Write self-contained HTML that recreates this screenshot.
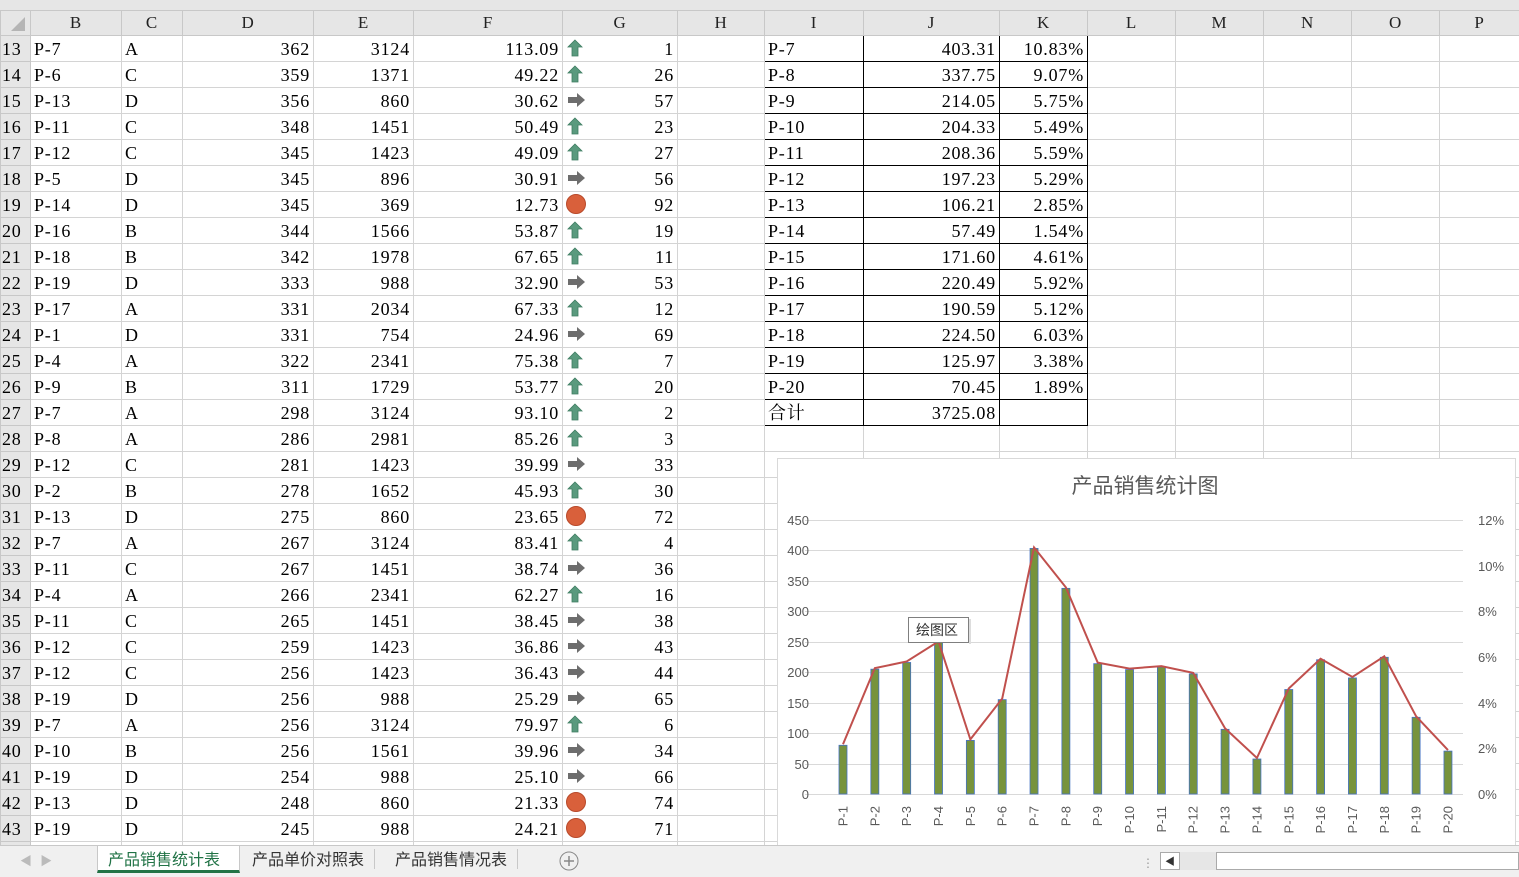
<!DOCTYPE html>
<html><head><meta charset="utf-8">
<style>
*{margin:0;padding:0;box-sizing:border-box}
body{width:1519px;height:877px;overflow:hidden;background:#fff;position:relative;font-family:"Liberation Serif","Noto Serif CJK SC",serif;font-size:18px;letter-spacing:0.8px;color:#000}
#top{position:absolute;left:0;top:0;width:1519px;height:10px;background:#e6e6e6}
table{position:absolute;left:0;top:10px;border-collapse:collapse;table-layout:fixed;width:1519px}
td{height:26px;padding:0 3px;border:1px solid #d4d4d4;white-space:nowrap;overflow:hidden;line-height:24px}
tr.h td{height:25px;line-height:22px;background:#e6e6e6;text-align:center;border-color:#c8c8c8;font-size:17px;color:#222}
td.r{text-align:right}
td.n{background:#e6e6e6;border-color:#c8c8c8;padding:0 1px;font-size:18px}
td.b{border:1px solid #000}
td.g{position:relative;text-align:right}
td.g svg{position:absolute;left:3px;top:3px}
#tabs{position:absolute;left:0;top:845px;width:1519px;height:32px;background:#f0f0f0;border-top:1px solid #c8c8c8;font-family:"Noto Sans CJK SC",sans-serif;font-size:16px;color:#333;letter-spacing:0}
.tab{position:absolute;top:0;height:27px;line-height:24px;padding:0 10px}
</style></head><body>
<div id="top"></div>
<table>
<colgroup><col style="width:30px"><col style="width:91px"><col style="width:61px"><col style="width:131px"><col style="width:100px"><col style="width:149px"><col style="width:115px"><col style="width:87px"><col style="width:99px"><col style="width:136px"><col style="width:88px"><col style="width:88px"><col style="width:88px"><col style="width:88px"><col style="width:88px"><col style="width:80px"></colgroup>
<tr class="h"><td style="background:#e6e6e6;position:relative"><svg width="20" height="20" style="position:absolute;left:6px;top:2px"><polygon points="18,4 18,18 4,18" fill="#b5b5b5"/></svg></td><td>B</td><td>C</td><td>D</td><td>E</td><td>F</td><td>G</td><td>H</td><td>I</td><td>J</td><td>K</td><td>L</td><td>M</td><td>N</td><td>O</td><td>P</td></tr>
<tbody id="tb"></tbody>
</table>
<svg width="1519" height="845" style="position:absolute;left:0;top:0;letter-spacing:0" font-family="Liberation Sans, sans-serif">
<rect x="777.5" y="458.5" width="738" height="400" fill="#fff" stroke="#d9d9d9"/>
<text x="1145" y="493" text-anchor="middle" font-size="21" fill="#595959" font-family="Noto Sans CJK SC, sans-serif">产品销售统计图</text>
<g stroke="#d9d9d9" stroke-width="1">
<line x1="805" x2="1463" y1="520.5" y2="520.5"/><line x1="805" x2="1463" y1="550.5" y2="550.5"/><line x1="805" x2="1463" y1="581.5" y2="581.5"/><line x1="805" x2="1463" y1="611.5" y2="611.5"/><line x1="805" x2="1463" y1="642.5" y2="642.5"/><line x1="805" x2="1463" y1="672.5" y2="672.5"/><line x1="805" x2="1463" y1="703.5" y2="703.5"/><line x1="805" x2="1463" y1="733.5" y2="733.5"/><line x1="805" x2="1463" y1="764.5" y2="764.5"/><line x1="805" x2="1463" y1="794.5" y2="794.5"/>
</g>
<g font-size="13" fill="#595959" text-anchor="end">
<text x="809" y="525">450</text><text x="809" y="555">400</text><text x="809" y="586">350</text><text x="809" y="616">300</text><text x="809" y="647">250</text><text x="809" y="677">200</text><text x="809" y="708">150</text><text x="809" y="738">100</text><text x="809" y="769">50</text><text x="809" y="799">0</text>
</g>
<g font-size="13" fill="#595959">
<text x="1478" y="525">12%</text><text x="1478" y="571">10%</text><text x="1478" y="616">8%</text><text x="1478" y="662">6%</text><text x="1478" y="708">4%</text><text x="1478" y="753">2%</text><text x="1478" y="799">0%</text>
</g>
<g id="bars" fill="#77933c" stroke="#4472c4" stroke-width="0.8"></g>
<polyline id="ln" fill="none" stroke="#c0504d" stroke-width="2"/>
<g id="xl" font-size="13" fill="#595959"></g>
<rect x="908.5" y="617.5" width="60" height="25" fill="#fff" stroke="#7f7f7f"/>
<rect x="969" y="619" width="2" height="25" fill="#ddd"/>
<text x="916" y="635" font-size="14" fill="#333" font-family="Noto Sans CJK SC, sans-serif">绘图区</text>
</svg>
<div id="tabs">
<div style="position:absolute;left:20px;top:6px;color:#bbb;font-size:12px">◀ &nbsp; ▶</div>
<div class="tab" style="left:97px;width:143px;background:#fff;color:#217346;border-bottom:3px solid #217346;border-left:1px solid #c8c8c8;border-right:1px solid #c8c8c8">产品销售统计表</div>
<div class="tab" style="left:242px;border-right:1px solid #c8c8c8;top:3px;height:20px;line-height:18px">产品单价对照表</div>
<div class="tab" style="left:385px;border-right:1px solid #c8c8c8;top:3px;height:20px;line-height:18px">产品销售情况表</div>
<svg style="position:absolute;left:559px;top:5px" width="20" height="20"><circle cx="10" cy="10" r="9" fill="none" stroke="#888"/><path d="M10 5v10M5 10h10" stroke="#888" stroke-width="1.5"/></svg>
<div style="position:absolute;left:1142px;top:8px;color:#999;font-size:12px">⋮</div>
<div style="position:absolute;left:1160px;top:6px;width:20px;height:18px;background:#fff;border:1px solid #aaa;font-size:10px;line-height:16px;text-align:center">◀</div>
<div style="position:absolute;left:1180px;top:6px;width:36px;height:18px;background:#e6e6e6"></div>
<div style="position:absolute;left:1216px;top:6px;width:303px;height:18px;background:#fff;border:1px solid #aaa"></div>
</div>
<script>
var d=[["P-7","A",362,3124,"113.09","u",1],["P-6","C",359,1371,"49.22","u",26],["P-13","D",356,860,"30.62","r",57],["P-11","C",348,1451,"50.49","u",23],["P-12","C",345,1423,"49.09","u",27],["P-5","D",345,896,"30.91","r",56],["P-14","D",345,369,"12.73","c",92],["P-16","B",344,1566,"53.87","u",19],["P-18","B",342,1978,"67.65","u",11],["P-19","D",333,988,"32.90","r",53],["P-17","A",331,2034,"67.33","u",12],["P-1","D",331,754,"24.96","r",69],["P-4","A",322,2341,"75.38","u",7],["P-9","B",311,1729,"53.77","u",20],["P-7","A",298,3124,"93.10","u",2],["P-8","A",286,2981,"85.26","u",3],["P-12","C",281,1423,"39.99","r",33],["P-2","B",278,1652,"45.93","u",30],["P-13","D",275,860,"23.65","c",72],["P-7","A",267,3124,"83.41","u",4],["P-11","C",267,1451,"38.74","r",36],["P-4","A",266,2341,"62.27","u",16],["P-11","C",265,1451,"38.45","r",38],["P-12","C",259,1423,"36.86","r",43],["P-12","C",256,1423,"36.43","r",44],["P-19","D",256,988,"25.29","r",65],["P-7","A",256,3124,"79.97","u",6],["P-10","B",256,1561,"39.96","r",34],["P-19","D",254,988,"25.10","r",66],["P-13","D",248,860,"21.33","c",74],["P-19","D",245,988,"24.21","c",71],["","","","","","",""]];
var t=[["P-7","403.31","10.83%"],["P-8","337.75","9.07%"],["P-9","214.05","5.75%"],["P-10","204.33","5.49%"],["P-11","208.36","5.59%"],["P-12","197.23","5.29%"],["P-13","106.21","2.85%"],["P-14","57.49","1.54%"],["P-15","171.60","4.61%"],["P-16","220.49","5.92%"],["P-17","190.59","5.12%"],["P-18","224.50","6.03%"],["P-19","125.97","3.38%"],["P-20","70.45","1.89%"],["合计","3725.08",""]];
var ic={u:'<svg width="18" height="18"><path d="M9 1L16 8H12V17H6V8H2Z" fill="#5a9a7e" stroke="#3f7d62" stroke-width=".8"/></svg>',r:'<svg width="20" height="18"><path d="M19 9L11 2V6H2V12H11V16Z" fill="#6d6d6d"/></svg>',c:'<svg width="20" height="20" style="top:2px"><circle cx="10" cy="10" r="9.5" fill="#d9603b" stroke="#b84a2b"/></svg>'};
var h="";
d.forEach(function(r,i){
h+='<tr><td class="n">'+(13+i)+'</td><td>'+r[0]+'</td><td>'+r[1]+'</td><td class="r">'+r[2]+'</td><td class="r">'+r[3]+'</td><td class="r">'+r[4]+'</td><td class="g">'+(r[5]?ic[r[5]]:'')+r[6]+'</td><td></td>';
if(i<t.length){var x=t[i];h+='<td class="b">'+x[0]+'</td><td class="b r">'+x[1]+'</td><td class="b r">'+x[2]+'</td>';}else h+='<td></td><td></td><td></td>';
h+='<td></td><td></td><td></td><td></td><td></td></tr>';});
document.getElementById('tb').innerHTML=h;
var v=[80,205,216,249,88,155,403.31,337.75,214.05,204.33,208.36,197.23,106.21,57.49,171.6,220.49,190.59,224.5,125.97,70.45];
var b="",p=[],l="";
v.forEach(function(q,i){var x=843+i*31.84,y=794-q*0.6089;b+='<rect x="'+(x-4)+'" y="'+y+'" width="8" height="'+(794-y)+'"/>';p.push(x+','+(y-1));l+='<text transform="translate('+(x+4.5)+',806) rotate(-90)" text-anchor="end">P-'+(i+1)+'</text>';});
document.getElementById('bars').innerHTML=b;
document.getElementById('ln').setAttribute('points',p.join(' '));
document.getElementById('xl').innerHTML=l;
</script>
</body></html>
